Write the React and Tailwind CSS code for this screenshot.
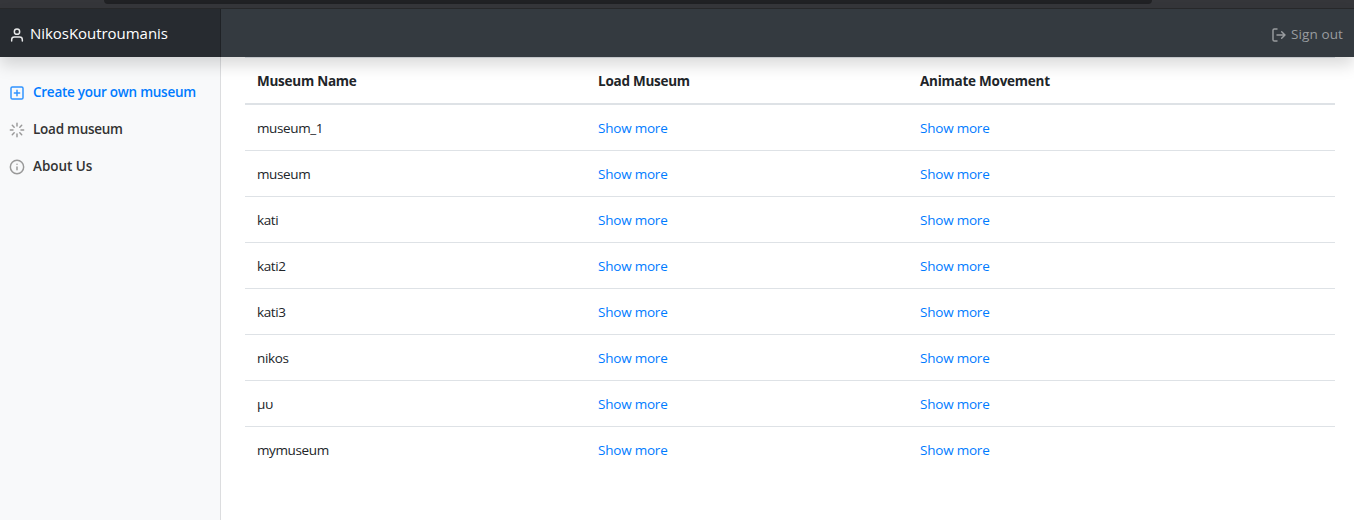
const Icon = ({ children, className = "" }) => (
  <svg className={"size-4 shrink-0 " + className} viewBox="0 0 24 24" fill="none" stroke="currentColor" strokeWidth="2.2" strokeLinecap="round" strokeLinejoin="round">
    {children}
  </svg>
);

const museums = ["museum_1", "museum", "kati", "kati2", "kati3", "nikos", "μυ", "mymuseum"];

export default function App() {
  return (
    <div className="flex h-[520px] w-[1354px] flex-col overflow-hidden bg-white font-['Open_Sans','Noto_Sans',sans-serif] text-[13.5px] leading-5 text-[#212529]">
      <div className="h-[9px] shrink-0 border-b border-[#28292b] bg-[#35363a] pr-[202px] pl-[104px]">
        <div className="h-1 rounded-b-lg bg-[#202124]" />
      </div>
      <header className="z-10 flex h-12 shrink-0 bg-[#343a40] shadow-[0_8px_16px_rgba(0,0,0,0.15)]">
        <div className="flex w-[221px] items-center border-r border-[#1f2226] bg-[#272b30] pl-[9px] text-white">
          <Icon className="mt-1 text-[#e8e9ea]">
            <path d="M20 21v-2a4 4 0 0 0-4-4H8a4 4 0 0 0-4 4v2" />
            <circle cx="12" cy="7" r="4" />
          </Icon>
          <span className="ml-[5px] text-[15px] tracking-[-0.04px]">NikosKoutroumanis</span>
        </div>
        <a className="ml-auto flex items-center pr-[11px] text-[#999c9f]">
          <Icon className="mt-[3px]">
            <path d="M9 21H5a2 2 0 0 1-2-2V5a2 2 0 0 1 2-2h4M16 17l5-5-5-5M21 12H9" />
          </Icon>
          <span className="mt-0.5 ml-1 tracking-[0.12px]">Sign out</span>
        </a>
      </header>
      <div className="flex min-h-0 flex-1">
        <nav className="flex w-[221px] shrink-0 flex-col border-r border-[#dcdddf] bg-[#f8f9fa] pt-[17px] pl-[9px] font-semibold text-[#333]">
          <a className="flex h-[37px] items-center text-[#007bff]">
            <Icon className="text-[#2f93ff]">
              <rect x="3" y="3" width="18" height="18" rx="2" />
              <path d="M12 8v8M8 12h8" />
            </Icon>
            <span className="mb-px ml-2 tracking-[-0.26px]">Create your own museum</span>
          </a>
          <a className="flex h-[37px] items-center">
            <Icon className="text-[#999]">
              <path d="M12 2v4M12 18v4M4.93 4.93l2.83 2.83M16.24 16.24l2.83 2.83M2 12h4M18 12h4M4.93 19.07l2.83-2.83M16.24 7.76l2.83-2.83" />
            </Icon>
            <span className="mb-px ml-2 tracking-[-0.26px]">Load museum</span>
          </a>
          <a className="flex h-[37px] items-center">
            <Icon className="text-[#999]">
              <circle cx="12" cy="12" r="10" />
              <path d="M12 16v-4M12 8h.01" />
            </Icon>
            <span className="mb-px ml-2 tracking-[-0.05px]">About Us</span>
          </a>
        </nav>
        <main className="flex-1 pr-[19px] pl-6">
          <div className="grid h-12 grid-cols-[341px_322px_1fr] items-center border-t border-b-2 border-[#dee2e6] pt-px pl-3 font-bold tracking-[-0.25px]">
            <span>Museum Name</span>
            <span>Load Museum</span>
            <span>Animate Movement</span>
          </div>
          {museums.map((name) => (
            <div key={name} className="grid h-[46px] grid-cols-[341px_322px_1fr] items-center border-b border-[#dee2e6] pt-px pl-3 tracking-[-0.22px] last:border-transparent">
              <span className="tracking-[-0.38px]">{name}</span>
              <a className="text-[#007bff]">Show more</a>
              <a className="text-[#007bff]">Show more</a>
            </div>
          ))}
        </main>
      </div>
    </div>
  );
}
